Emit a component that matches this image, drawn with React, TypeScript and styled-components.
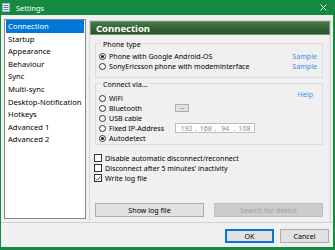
import styled, { createGlobalStyle } from 'styled-components';

const GlobalStyle = createGlobalStyle`
  html, body {
    margin: 0;
    padding: 0;
    background: #ffffff;
  }
  * {
    box-sizing: border-box;
  }
`;

const pages = [
  'Connection',
  'Startup',
  'Appearance',
  'Behaviour',
  'Sync',
  'Multi-sync',
  'Desktop-Notification',
  'Hotkeys',
  'Advanced 1',
  'Advanced 2',
];

const connections = [
  { label: 'WiFi' },
  { label: 'Bluetooth', extra: 'dots' },
  { label: 'USB cable' },
  { label: 'Fixed IP-Address', extra: 'ip' },
  { label: 'Autodetect', checked: true },
];

const options = [
  { label: 'Disable automatic disconnect/reconnect', checked: false },
  { label: "Disconnect after 5 minutes' inactivity", checked: false },
  { label: 'Write log file', checked: true },
];

const App = () => {
  return (
    <>
      <GlobalStyle />
      <Window>
        <TitleBar>
          <svg width="8" height="9" viewBox="0 0 8 9">
            <rect x="0.5" y="0.5" width="7" height="8" fill="#e8eef4" stroke="#9fb3c8" />
            <rect x="1.5" y="2" width="5" height="1" fill="#5a7fa8" />
            <rect x="1.5" y="4" width="5" height="1" fill="#5a7fa8" />
            <rect x="1.5" y="6" width="5" height="1" fill="#5a7fa8" />
          </svg>
          <Title>Settings</Title>
          <Close>
            <svg width="7" height="7" viewBox="0 0 7 7">
              <path d="M0.5 0.5 L6.5 6.5 M6.5 0.5 L0.5 6.5" stroke="#ffffff" strokeWidth="0.9" />
            </svg>
          </Close>
        </TitleBar>

        <Body>
          <PageList>
            {pages.map((p, i) => (
              <PageItem key={p} $active={i === 0}>
                {p}
              </PageItem>
            ))}
          </PageList>

          <Panel>
            <PanelHeader>Connection</PanelHeader>
            <PanelContent>
              <Group>
                <Legend>Phone type</Legend>
                <PhoneRow>
                  <Radio $checked />
                  <Text>Phone with Google Android-OS</Text>
                  <LinkText>Sample</LinkText>
                </PhoneRow>
                <PhoneRow>
                  <Radio />
                  <Text>SonyEricsson phone with modeminterface</Text>
                  <LinkText>Sample</LinkText>
                </PhoneRow>
              </Group>

              <Group $second>
                <Legend>Connect via...</Legend>
                <ConnectGrid>
                  <ConnectList>
                    {connections.map((c) => (
                      <ConnectRow key={c.label}>
                        <RadioLabel>
                          <Radio $checked={c.checked} />
                          <Text>{c.label}</Text>
                        </RadioLabel>
                        {c.extra === 'dots' && <DotsButton>...</DotsButton>}
                        {c.extra === 'ip' && (
                          <IpBox>
                            <IpPart>192</IpPart>.<IpPart>168</IpPart>.<IpPart>94</IpPart>.
                            <IpPart>108</IpPart>
                          </IpBox>
                        )}
                      </ConnectRow>
                    ))}
                  </ConnectList>
                  <HelpLink>Help</HelpLink>
                </ConnectGrid>
              </Group>

              <CheckList>
                {options.map((o) => (
                  <CheckRow key={o.label}>
                    <CheckBox>
                      {o.checked && (
                        <svg width="7" height="7" viewBox="0 0 7 7">
                          <path d="M1 3.6 L2.8 5.4 L6 1.4" fill="none" stroke="#222" strokeWidth="0.9" />
                        </svg>
                      )}
                    </CheckBox>
                    <Text>{o.label}</Text>
                  </CheckRow>
                ))}
              </CheckList>

              <ActionRow>
                <ActionButton>Show log file</ActionButton>
                <ActionButton disabled>Search for device</ActionButton>
              </ActionRow>
            </PanelContent>
          </Panel>
        </Body>

        <Footer>
          <DialogButton $primary>OK</DialogButton>
          <DialogButton>Cancel</DialogButton>
        </Footer>
      </Window>
    </>
  );
};

const Window = styled.div`
  width: 335px;
  height: 250px;
  display: flex;
  flex-direction: column;
  background: #f0f0f0;
  border-left: 1px solid #138a3f;
  border-right: 2px solid #138a3f;
  border-bottom: 3px solid #138a3f;
  font-family: 'Noto Sans', 'DejaVu Sans', sans-serif;
  font-size: 7.1px;
  color: #000000;
`;

const TitleBar = styled.div`
  height: 15px;
  flex-shrink: 0;
  display: flex;
  align-items: center;
  padding: 0 6px 0 1px;
  margin-left: -1px;
  margin-right: -2px;
  background: #138a3f;
  color: #ffffff;

  svg {
    margin-left: 1px;
    flex-shrink: 0;
  }
`;

const Title = styled.span`
  margin-left: 6px;
  font-size: 7.4px;
`;

const Close = styled.span`
  margin-left: auto;
  display: flex;
  margin-right: 2px;
`;

const Body = styled.div`
  height: 207px;
  display: flex;
  align-items: flex-start;
  gap: 3px;
  padding: 4px 2px 0 3px;
`;

const PageList = styled.div`
  width: 82px;
  height: 200px;
  background: #ffffff;
  border: 1px solid #828790;
  padding: 0 1px;
`;

const PageItem = styled.div<{ $active?: boolean }>`
  height: 12.6px;
  line-height: 12.6px;
  padding-left: 2px;
  font-size: 7.6px;
  white-space: nowrap;
  color: ${(p) => (p.$active ? '#ffffff' : '#000000')};
  background: ${(p) => (p.$active ? '#0078d7' : 'transparent')};
`;

const Panel = styled.div`
  width: 242px;
  height: 202px;
  margin-top: 1px;
  border: 1px solid #d6d6d6;
  border-bottom: none;
  display: flex;
  flex-direction: column;
`;

const PanelHeader = styled.div`
  height: 14px;
  flex-shrink: 0;
  padding-left: 5px;
  line-height: 13px;
  font-size: 9.5px;
  font-weight: 700;
  color: #ffffff;
  background: linear-gradient(to bottom, #4a7b4a 0%, #36653a 45%, #2a512e 100%);
  border: 1px solid #6f9670;
`;

const PanelContent = styled.div`
  flex: 1;
  padding: 2px 6px 0 5px;
  display: flex;
  flex-direction: column;
  border-right: 1px solid #e4e4e4;
`;

const Group = styled.fieldset<{ $second?: boolean }>`
  margin: 0;
  margin-top: ${(p) => (p.$second ? '0' : '1px')};
  padding: ${(p) => (p.$second ? '5px 4px 1px 3px' : '3px 4px 6px 3px')};
  border: 1px solid #dcdcdc;
  min-width: 0;
`;

const Legend = styled.legend`
  padding: 2px 2px 0;
  margin-left: 2px;
  line-height: 8px;
`;

const PhoneRow = styled.div`
  height: 10px;
  display: flex;
  align-items: center;
`;

const Radio = styled.span<{ $checked?: boolean }>`
  width: 7px;
  height: 7px;
  flex-shrink: 0;
  border-radius: 50%;
  border: 1px solid #333333;
  background: #ffffff;
  display: flex;
  align-items: center;
  justify-content: center;
  margin-right: 3px;

  &::after {
    content: '';
    width: 3px;
    height: 3px;
    border-radius: 50%;
    background: ${(p) => (p.$checked ? '#1a1a1a' : 'transparent')};
  }
`;

const Text = styled.span`
  white-space: nowrap;
  line-height: 10px;
`;

const LinkText = styled.span`
  margin-left: auto;
  margin-right: 1px;
  color: #3c91e6;
  line-height: 10px;
`;

const ConnectGrid = styled.div`
  display: grid;
  grid-template-columns: 1fr auto;
`;

const ConnectList = styled.div`
  display: flex;
  flex-direction: column;
`;

const ConnectRow = styled.div`
  height: 10px;
  display: grid;
  grid-template-columns: 76px auto;
  align-items: center;
`;

const RadioLabel = styled.div`
  display: flex;
  align-items: center;
`;

const DotsButton = styled.span`
  width: 14px;
  height: 8px;
  background: #e1e1e1;
  border: 1px solid #adadad;
  font-size: 6px;
  line-height: 4px;
  text-align: center;
  color: #333;
`;

const IpBox = styled.span`
  width: 80px;
  height: 10px;
  background: #ffffff;
  border: 1px solid #bcbcbc;
  display: flex;
  align-items: center;
  padding: 0 3px 0 4px;
  color: #8a8a8a;
  line-height: 8px;
  justify-content: space-between;
`;

const IpPart = styled.span`
  width: 13px;
  text-align: center;
`;

const HelpLink = styled.span`
  margin-top: -4px;
  margin-right: 5px;
  color: #3c91e6;
  line-height: 10px;
`;

const CheckList = styled.div`
  margin-top: 8px;
  display: flex;
  flex-direction: column;
`;

const CheckRow = styled.div`
  height: 10px;
  display: flex;
  align-items: center;
`;

const CheckBox = styled.span`
  width: 8px;
  height: 8px;
  flex-shrink: 0;
  border: 1px solid #333333;
  background: #ffffff;
  display: flex;
  align-items: center;
  justify-content: center;
  margin: 0 3px 0 -1px;
`;

const ActionRow = styled.div`
  margin-top: 20px;
  display: grid;
  grid-template-columns: 1fr 1fr;
  gap: 10px;
`;

const ActionButton = styled.button`
  height: 14px;
  padding: 0;
  font-family: inherit;
  font-size: 7.1px;
  color: #000000;
  background: #e1e1e1;
  border: 1px solid #adadad;

  &:disabled {
    color: #a0a0a0;
    background: #cccccc;
    border-color: #bfbfbf;
  }
`;

const Footer = styled.div`
  flex: 1;
  border-top: 1px solid #d0d0d0;
  display: flex;
  justify-content: flex-end;
  gap: 6px;
  padding: 6px 4px 0 0;
`;

const DialogButton = styled.button<{ $primary?: boolean }>`
  width: 49px;
  height: 14px;
  padding: 0;
  font-family: inherit;
  font-size: 7.1px;
  color: #000000;
  background: #e1e1e1;
  border: 1px solid ${(p) => (p.$primary ? '#0078d7' : '#adadad')};
  box-shadow: ${(p) => (p.$primary ? 'inset 0 0 0 1px #0078d7' : 'none')};
`;

export default App;
